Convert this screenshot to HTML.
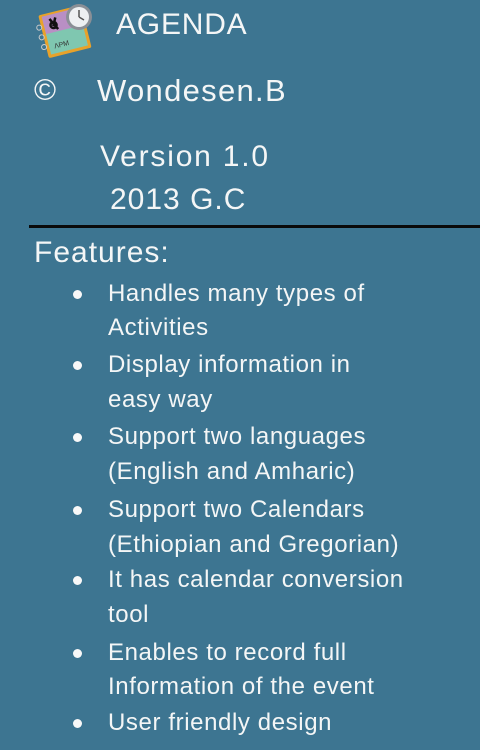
<!DOCTYPE html>
<html><head><meta charset="utf-8"><style>
html,body{margin:0;padding:0}
body{width:480px;height:750px;background:#3d7591;position:relative;overflow:hidden;font-family:"Liberation Sans",sans-serif;color:#f4f6f6}
.t{position:absolute;white-space:nowrap;line-height:30px;height:30px}
.b{font-size:24px;letter-spacing:0.6px}
.d{position:absolute;width:9px;height:9px;border-radius:50%;background:#f8f8f8;left:73px}
</style></head><body>
<svg style="position:absolute;left:33px;top:2px" width="66" height="58" viewBox="0 0 66 58">
<g transform="rotate(-14 30 30)">
<rect x="10" y="8" width="44" height="44" rx="2" fill="#e8a22a"/>
<rect x="13" y="10" width="38" height="20" fill="#b98fc4"/>
<rect x="13" y="28" width="38" height="21" fill="#7fc7b0"/>
<text x="18" y="44" font-size="7" fill="#333" font-family="Liberation Sans">ΛPM</text>
<path d="M20 14 l6 12 M26 14 l-4 8 M22 18 a3 3 0 1 0 1 0" stroke="#111" stroke-width="2.5" fill="none"/>
<circle cx="8" cy="20" r="2.5" fill="none" stroke="#ccc"/><circle cx="8" cy="30" r="2.5" fill="none" stroke="#ccc"/><circle cx="8" cy="40" r="2.5" fill="none" stroke="#ccc"/>
</g>
<circle cx="46" cy="15" r="13" fill="#8a8f96"/><circle cx="46" cy="15" r="10" fill="#eef0f2"/>
<path d="M46 15 L46 8 M46 15 L51 18" stroke="#555" stroke-width="1.5"/>
</svg>
<div class="t" style="left:116px;top:8px;font-size:30px;letter-spacing:0.8px;line-height:34px;height:34px">AGENDA</div>
<div class="t" style="left:34px;top:74px;font-size:30px;line-height:34px;height:34px">©</div>
<div class="t" style="left:97px;top:74px;font-size:31px;letter-spacing:1.3px;line-height:34px;height:34px">Wondesen.B</div>
<div class="t" style="left:100px;top:140px;font-size:30px;letter-spacing:1.8px;line-height:34px;height:34px">Version 1.0</div>
<div class="t" style="left:110px;top:183px;font-size:30px;letter-spacing:1px;line-height:34px;height:34px">2013 G.C</div>
<div style="position:absolute;left:29px;top:225px;width:451px;height:3px;background:#0a0a0a"></div>
<div class="t" style="left:34px;top:236px;font-size:30px;letter-spacing:1px;line-height:34px;height:34px">Features:</div>

<div class="d" style="top:290px"></div>
<div class="t b" style="left:108px;top:279px">Handles many types of</div>
<div class="t b" style="left:108px;top:313px">Activities</div>
<div class="d" style="top:361px"></div>
<div class="t b" style="left:108px;top:350px">Display information in</div>
<div class="t b" style="left:108px;top:385px">easy way</div>
<div class="d" style="top:433px"></div>
<div class="t b" style="left:108px;top:422px">Support two languages</div>
<div class="t b" style="left:108px;top:457px">(English and Amharic)</div>
<div class="d" style="top:506px"></div>
<div class="t b" style="left:108px;top:495px">Support two Calendars</div>
<div class="t b" style="left:108px;top:530px">(Ethiopian and Gregorian)</div>
<div class="d" style="top:576px"></div>
<div class="t b" style="left:108px;top:565px">It has calendar conversion</div>
<div class="t b" style="left:108px;top:600px">tool</div>
<div class="d" style="top:649px"></div>
<div class="t b" style="left:108px;top:638px">Enables to record full</div>
<div class="t b" style="left:108px;top:672px">Information of the event</div>
<div class="d" style="top:719px"></div>
<div class="t b" style="left:108px;top:708px">User friendly design</div>
</body></html>
